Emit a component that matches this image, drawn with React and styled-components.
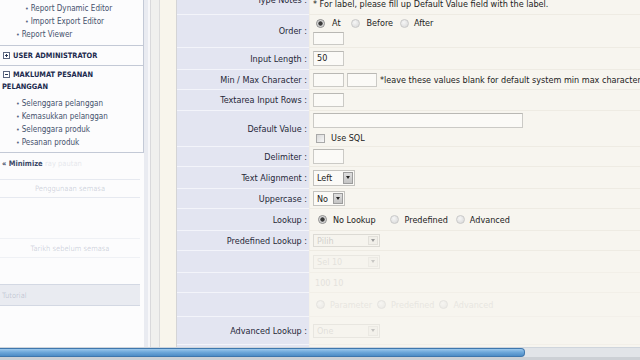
import React from "react";
import styled, { createGlobalStyle, css } from "styled-components";

const GlobalStyle = createGlobalStyle`
  html, body { margin: 0; padding: 0; background: #f7f5ef; }
  body { font-family: "DejaVu Sans Condensed", "DejaVu Sans", "Liberation Sans", sans-serif; }
`;

const Screen = styled.div`
  width: 640px;
  height: 360px;
  overflow: hidden;
  display: flex;
  flex-direction: column;
  background: #f7f5ef;
`;

const Main = styled.div`
  display: flex;
  height: 347px;
  overflow: hidden;
`;

/* ---------- sidebar ---------- */
const Sidebar = styled.aside`
  width: 144px;
  flex: none;
  background: #fcfcfd;
  display: flex;
  flex-direction: column;
`;

const MenuBox = styled.div`
  height: 153px;
  box-sizing: border-box;
  border-right: 1px solid #c3c9d6;
  border-bottom: 1px solid #c3c9d6;
  display: flex;
  flex-direction: column;
`;

const Section = styled.div`
  ${(p) => p.$divided && css`border-top: 1px solid #c3c9d6;`}
  padding: ${(p) => p.$pad || "0"};
  display: flex;
  flex-direction: column;
`;

const Header = styled.div`
  display: flex;
  align-items: flex-start;
  gap: 3px;
  padding-left: ${(p) => p.$indent || 3}px;
  font-size: 7.4px;
  font-weight: bold;
  line-height: 12px;
  color: #1b2a4e;
  text-transform: uppercase;
`;

const ToggleBox = styled.span`
  width: 7px;
  height: 7px;
  flex: none;
  margin-top: 2px;
  border: 1px solid #5b6680;
  box-sizing: border-box;
  position: relative;
  background: #fff;
  &::before {
    content: "";
    position: absolute;
    left: 1px;
    right: 1px;
    top: 2px;
    height: 1px;
    background: #2d3a58;
  }
  ${(p) =>
    p.$plus &&
    css`
      &::after {
        content: "";
        position: absolute;
        top: 1px;
        bottom: 1px;
        left: 2px;
        width: 1px;
        background: #2d3a58;
      }
    `}
`;

const Spacer = styled.div`
  height: ${(p) => p.$h}px;
  flex: none;
`;

const MenuItem = styled.div`
  height: 13px;
  line-height: 13px;
  padding-left: ${(p) => p.$indent}px;
  font-size: 8px;
  color: #44516c;
  white-space: nowrap;
  &::before {
    content: "•";
    font-size: 7px;
    margin-right: 2px;
    color: #5a6783;
  }
`;

const MinimizeRow = styled.div`
  height: 20px;
  line-height: 21px;
  padding-left: 2px;
  font-size: 7.5px;
  font-weight: bold;
  color: #3c4a68;
  white-space: nowrap;
`;

const Ghost = styled.span`
  opacity: ${(p) => p.$o || 0.15};
  font-weight: normal;
  color: #6a7590;
`;

const GhostPanel = styled.div`
  margin-top: ${(p) => p.$mt || 0}px;
  height: ${(p) => p.$h}px;
  border-top: 1px solid rgba(190, 198, 214, ${(p) => p.$line || 0.35});
  border-bottom: 1px solid rgba(190, 198, 214, ${(p) => p.$line || 0.35});
  background: ${(p) => p.$bg || "transparent"};
  display: flex;
  align-items: center;
  justify-content: ${(p) => p.$justify || "center"};
  padding-left: ${(p) => p.$pl || 0}px;
  font-size: 7.5px;
  color: rgba(110, 120, 150, 0.3);
  white-space: nowrap;
  margin-right: 4px;
`;

/* ---------- gutter between sidebar and form ---------- */
const Gutter = styled.div`
  width: 33px;
  flex: none;
  background: linear-gradient(
    to right,
    #e9ebf1 0 4px,
    #f7f7f9 4px 6px,
    #d9d9db 6px 7px,
    #f0f0ee 7px 15px,
    #dcdcdc 15px 16px,
    #f8f5ec 16px 32px,
    #d4d4d6 32px 33px
  );
`;

/* ---------- form ---------- */
const FormArea = styled.div`
  flex: 1;
  overflow: hidden;
  background: #f7f5ef;
`;

const FormTable = styled.div`
  margin-top: -15px;
  display: flex;
  flex-direction: column;
`;

const Row = styled.div`
  display: grid;
  grid-template-columns: 132px 1fr;
  height: ${(p) => p.$h}px;
`;

const LabelCell = styled.div`
  background: #e3e5f1;
  border-bottom: 1px solid #f3f4fa;
  display: flex;
  align-items: center;
  justify-content: flex-end;
  padding-right: 2px;
  font-size: 9px;
  color: #262838;
  white-space: nowrap;
`;

const ValueCell = styled.div`
  background: #f7f5ef;
  border-bottom: 1px solid #eeebe3;
  border-left: 1px solid #f1eee6;
  padding-left: 3px;
  display: flex;
  flex-direction: column;
  justify-content: ${(p) => p.$justify || "center"};
  padding-top: ${(p) => p.$pt || 0}px;
  padding-bottom: ${(p) => p.$pb || 0}px;
  gap: ${(p) => p.$gap || 0}px;
  font-size: 9px;
  color: #222;
  opacity: ${(p) => p.$ghost || 1};
  overflow: hidden;
`;

const Line = styled.div`
  display: flex;
  align-items: center;
  height: ${(p) => p.$h || 10}px;
  gap: ${(p) => p.$gap || 3}px;
  padding-left: ${(p) => p.$pl || 0}px;
  white-space: nowrap;
`;

const Note = styled.span`
  font-size: 9px;
  color: #222;
  white-space: nowrap;
`;

const TextInput = styled.div`
  width: ${(p) => p.$w}px;
  height: ${(p) => p.$h || 14}px;
  box-sizing: border-box;
  border: 1px solid #cbcac6;
  border-top-color: #b9b8b4;
  background: #fbfaf7;
  font-size: 9px;
  line-height: ${(p) => (p.$h || 14) - 2}px;
  padding-left: 3px;
  color: #222;
  flex: none;
`;

const Radio = styled.span`
  width: 9px;
  height: 9px;
  flex: none;
  border-radius: 50%;
  box-sizing: border-box;
  border: 1px solid ${(p) => (p.$on ? "#8a8a8a" : "#c9c9c9")};
  background: ${(p) =>
    p.$on
      ? "radial-gradient(circle, #3a3a3a 0 1.8px, #bdbdbd 2.4px, #f2f2f2 3.6px)"
      : "radial-gradient(circle at 40% 35%, #f6f6f6, #d6d6d6)"};
`;

const Choice = styled.span`
  display: inline-flex;
  align-items: center;
  gap: ${(p) => p.$gap || 7}px;
  margin-right: ${(p) => p.$mr || 0}px;
  font-size: 9px;
  color: #222;
`;

const Checkbox = styled.span`
  width: 9px;
  height: 9px;
  flex: none;
  box-sizing: border-box;
  border: 1px solid #a9a9a9;
  background: linear-gradient(135deg, #d8d8d8, #f7f7f7);
  margin-left: 3px;
`;

const Select = styled.div`
  width: ${(p) => p.$w}px;
  height: ${(p) => p.$h || 15}px;
  box-sizing: border-box;
  border: 1px solid ${(p) => (p.$disabled ? "#dcdad4" : "#c4c3bf")};
  background: ${(p) => (p.$disabled ? "#f6f4ee" : "#fbfaf7")};
  display: flex;
  align-items: center;
  justify-content: space-between;
  padding-left: 3px;
  font-size: 9px;
  color: #222;
  flex: none;
`;

const SelectButton = styled.span`
  width: 10px;
  height: calc(100% - 2px);
  margin-right: 1px;
  box-sizing: border-box;
  border: 1px solid ${(p) => (p.$disabled ? "#e2e0da" : "#9c9c9c")};
  background: ${(p) => (p.$disabled ? "#f1efe9" : "linear-gradient(#dedede, #c4c4c4)")};
  display: flex;
  align-items: center;
  justify-content: center;
  &::after {
    content: "";
    border-left: 2.5px solid transparent;
    border-right: 2.5px solid transparent;
    border-top: 3px solid ${(p) => (p.$disabled ? "#9a9a9a" : "#222")};
  }
`;

const GhostText = styled.span`
  font-size: 9px;
  color: #8a8a8a;
  opacity: 0.35;
  white-space: nowrap;
`;

/* ---------- bottom progress bar ---------- */
const ProgressTrack = styled.div`
  height: 13px;
  flex: none;
  box-sizing: border-box;
  border-top: 1px solid #cfd5dc;
  background: linear-gradient(to bottom, #e1e4e8 0 9px, #ccd0d5 9px);
`;

const ProgressFill = styled.div`
  height: 9px;
  box-sizing: border-box;
  border-radius: 0 4px 4px 0;
  border: 1px solid #3f77ad;
  border-left: none;
  background: linear-gradient(to bottom, #9cc8ec 0%, #6ea8da 45%, #4d8cc6 100%);
`;

function Field({ label, h, children, ...cell }) {
  return (
    <Row $h={h}>
      <LabelCell>{label}</LabelCell>
      <ValueCell {...cell}>{children}</ValueCell>
    </Row>
  );
}

export default function App() {
  const progress = 525;
  return (
    <>
      <GlobalStyle />
      <Screen>
        <Main>
          <Sidebar>
            <MenuBox>
              <Section $pad="2px 0 4px 0">
                <MenuItem $indent={25}>Report Dynamic Editor</MenuItem>
                <MenuItem $indent={25}>Import Export Editor</MenuItem>
                <MenuItem $indent={16}>Report Viewer</MenuItem>
              </Section>
              <Section $divided $pad="4px 0 3px 0">
                <Header>
                  <ToggleBox $plus />
                  <span>User Administrator</span>
                </Header>
              </Section>
              <Section $divided $pad="3px 0 0 0">
                <Header>
                  <ToggleBox />
                  <span>Maklumat Pesanan</span>
                </Header>
                <Header $indent={2}>
                  <span>Pelanggan</span>
                </Header>
                <Spacer $h={4} />
                <MenuItem $indent={16}>Selenggara pelanggan</MenuItem>
                <MenuItem $indent={16}>Kemasukkan pelanggan</MenuItem>
                <MenuItem $indent={16}>Selenggara produk</MenuItem>
                <MenuItem $indent={16}>Pesanan produk</MenuItem>
              </Section>
            </MenuBox>
            <MinimizeRow>
              « Minimize <Ghost>ray pautan</Ghost>
            </MinimizeRow>
            <GhostPanel $mt={6} $h={17}>
              Penggunaan semasa
            </GhostPanel>
            <GhostPanel $mt={40} $h={18} $line={0.2}>
              Tarikh sebelum semasa
            </GhostPanel>
            <GhostPanel $mt={26} $h={20} $bg="#e9ebf1" $justify="flex-start" $pl={2} $line={0.5}>
              Tutorial
            </GhostPanel>
          </Sidebar>

          <Gutter />

          <FormArea>
            <FormTable>
              <Field label="Type Notes :" h={30} $justify="flex-end" $pb={5}>
                <Note>* For label, please fill up Default Value field with the label.</Note>
              </Field>

              <Field label="Order :" h={33} $justify="flex-start" $pt={3} $gap={4}>
                <Line $pl={3}>
                  <Choice $mr={7}>
                    <Radio $on />
                    At
                  </Choice>
                  <Choice $mr={4}>
                    <Radio />
                    Before
                  </Choice>
                  <Choice $gap={5}>
                    <Radio />
                    After
                  </Choice>
                </Line>
                <TextInput $w={31} $h={13} />
              </Field>

              <Field label="Input Length :" h={22}>
                <TextInput $w={31} $h={15}>
                  50
                </TextInput>
              </Field>

              <Field label="Min / Max Character :" h={20}>
                <Line $h={14}>
                  <TextInput $w={31} $h={14} />
                  <TextInput $w={30} $h={14} />
                  <Note>*leave these values blank for default system min max character</Note>
                </Line>
              </Field>

              <Field label="Textarea Input Rows :" h={21}>
                <TextInput $w={31} $h={14} />
              </Field>

              <Field label="Default Value :" h={36} $justify="flex-start" $pt={2} $gap={5}>
                <TextInput $w={210} $h={15} />
                <Line $gap={6}>
                  <Checkbox />
                  <Note>Use SQL</Note>
                </Line>
              </Field>

              <Field label="Delimiter :" h={20}>
                <TextInput $w={31} $h={15} />
              </Field>

              <Field label="Text Alignment :" h={22}>
                <Select $w={42} $h={16}>
                  Left
                  <SelectButton />
                </Select>
              </Field>

              <Field label="Uppercase :" h={20}>
                <Select $w={32} $h={15}>
                  No
                  <SelectButton />
                </Select>
              </Field>

              <Field label="Lookup :" h={22}>
                <Line $pl={5}>
                  <Choice $mr={11} $gap={6}>
                    <Radio $on />
                    No Lookup
                  </Choice>
                  <Choice $mr={5} $gap={6}>
                    <Radio />
                    Predefined
                  </Choice>
                  <Choice $gap={5}>
                    <Radio />
                    Advanced
                  </Choice>
                </Line>
              </Field>

              <Field label="Predefined Lookup :" h={20}>
                <Select $w={67} $h={13} $disabled>
                  <GhostText>Pilih</GhostText>
                  <SelectButton $disabled />
                </Select>
              </Field>

              <Field label="" h={22} $ghost={0.5}>
                <Line $h={14}>
                  <Select $w={67} $h={14} $disabled>
                    <GhostText>Sel 10</GhostText>
                    <SelectButton $disabled />
                  </Select>
                </Line>
              </Field>

              <Field label="" h={20} $ghost={0.5}>
                <Line $pl={2}>
                  <GhostText>100 10</GhostText>
                </Line>
              </Field>

              <Field label="" h={24} $ghost={0.4}>
                <Line $gap={5} $pl={3}>
                  <Radio />
                  <GhostText>Parameter</GhostText>
                  <Radio />
                  <GhostText>Predefined</GhostText>
                  <Radio />
                  <GhostText>Advanced</GhostText>
                </Line>
              </Field>

              <Field label="Advanced Lookup :" h={28} $ghost={0.55}>
                <Select $w={67} $h={14} $disabled>
                  <GhostText>One</GhostText>
                  <SelectButton $disabled />
                </Select>
              </Field>

              <Field label="" h={20} $ghost={0.5}>
                <Line />
              </Field>
            </FormTable>
          </FormArea>
        </Main>

        <ProgressTrack>
          <ProgressFill style={{ width: progress }} />
        </ProgressTrack>
      </Screen>
    </>
  );
}
